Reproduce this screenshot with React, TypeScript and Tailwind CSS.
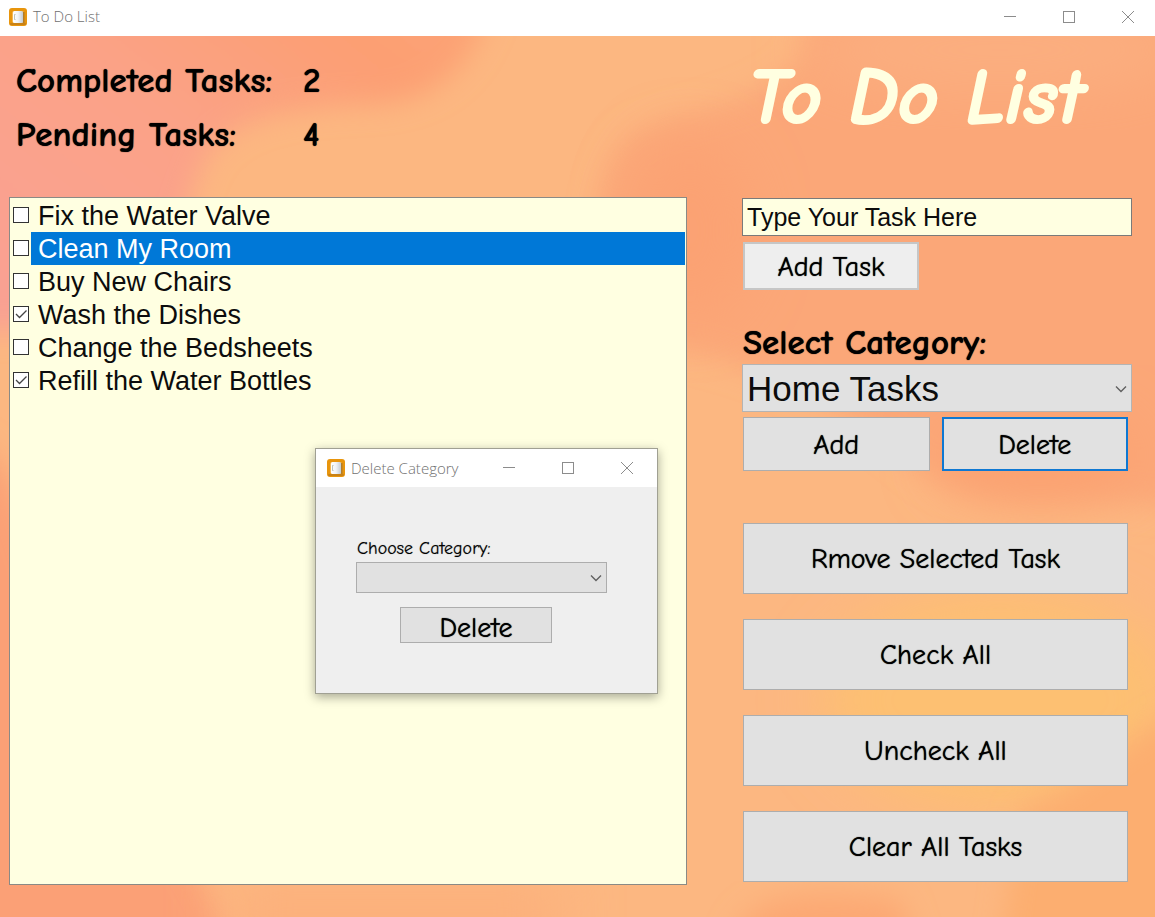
import { useState } from 'react'
import type { ReactNode } from 'react'

type Task = {
  id: number
  label: string
  done: boolean
}

const TASKS: Task[] = [
  { id: 1, label: 'Fix the Water Valve', done: false },
  { id: 2, label: 'Clean My Room', done: false },
  { id: 3, label: 'Buy New Chairs', done: false },
  { id: 4, label: 'Wash the Dishes', done: true },
  { id: 5, label: 'Change the Bedsheets', done: false },
  { id: 6, label: 'Refill the Water Bottles', done: true },
]

function AppIcon() {
  return (
    <svg viewBox="0 0 18 18" className="size-[18px] shrink-0" aria-hidden="true">
      <defs>
        <linearGradient id="page" x1="0" x2="1">
          <stop offset="0" stopColor="#ffffff" />
          <stop offset="0.5" stopColor="#f1f3f5" />
          <stop offset="1" stopColor="#c3cbd2" />
        </linearGradient>
      </defs>
      <rect width="18" height="18" rx="3" fill="#e8950c" />
      <rect x="1" y="15" width="16" height="2" rx="1" fill="#c98216" />
      <rect x="3" y="3" width="12" height="12" rx="2" fill="#f3b754" />
      <rect x="4" y="3" width="10" height="12" rx="1.5" fill="url(#page)" />
      <path d="M6.500 6.500H5.500V11.500H6.500" fill="none" stroke="#a3ab98" strokeWidth="0.7" />
      <rect x="14" y="4" width="1.5" height="11" fill="#b07d2c" />
    </svg>
  )
}

function TitleBar({ title, className }: { title: string; className: string }) {
  return (
    <header className={`flex items-center bg-white ${className}`}>
      <AppIcon />
      <span className='ml-[6px] flex-1 whitespace-nowrap pb-px font-["Segoe_UI","Open_Sans",sans-serif] text-[15px] leading-5 font-light text-[#707070]'>
        {title}
      </span>
      <div className="flex gap-[35px] text-[#8c8c8c]">
        <button type="button" aria-label="Minimize" className="w-6">
          <svg viewBox="0 0 24 12" className="h-3 w-6" stroke="currentColor" fill="none" shapeRendering="crispEdges">
            <path d="M6 5.500h12" />
          </svg>
        </button>
        <button type="button" aria-label="Maximize" className="w-6">
          <svg viewBox="0 0 24 12" className="h-3 w-6" stroke="currentColor" fill="none" shapeRendering="crispEdges">
            <path d="M6.500 0.500h11v11h-11z" />
          </svg>
        </button>
        <button type="button" aria-label="Close" className="w-6">
          <svg viewBox="0 0 24 12" className="h-3 w-6" stroke="currentColor" fill="none">
            <path d="M6 0l12 12M18 0L6 12" />
          </svg>
        </button>
      </div>
    </header>
  )
}

function Backdrop() {
  return (
    <svg
      viewBox="0 36 1155 881"
      preserveAspectRatio="none"
      className="absolute inset-0 size-full"
      aria-hidden="true"
    >
      <defs>
        <filter id="soft" x="-20%" y="-20%" width="140%" height="140%">
          <feGaussianBlur stdDeviation="14" />
        </filter>
        <filter id="softer" x="-50%" y="-50%" width="200%" height="200%">
          <feGaussianBlur stdDeviation="28" />
        </filter>
        <linearGradient id="rose" x1="0" y1="0.8" x2="1" y2="0">
          <stop offset="0" stopColor="#f9a193" />
          <stop offset="0.45" stopColor="#fba287" />
          <stop offset="0.75" stopColor="#fc9f73" />
          <stop offset="1" stopColor="#fca575" />
        </linearGradient>
      </defs>
      <rect y="36" width="1155" height="881" fill="#fcb781" />
      <path
        d="M-60 -20H500C480 50 455 95 380 104C300 106 230 115 205 160C190 190 186 230 150 300C80 340 0 330 -60 330Z"
        fill="url(#rose)"
        filter="url(#soft)"
      />
      <path
        d="M820 -20H1220V520C1100 480 980 520 920 470C840 400 740 350 600 340C590 250 590 170 630 135C680 110 760 105 800 60Z"
        fill="#fba778"
        filter="url(#soft)"
      />
      <ellipse cx="1000" cy="50" rx="190" ry="40" fill="#fbaf80" filter="url(#softer)" />
      <ellipse cx="690" cy="230" rx="60" ry="90" fill="#fba273" filter="url(#softer)" />
      <ellipse cx="1040" cy="455" rx="100" ry="45" fill="#fba271" filter="url(#softer)" />
      <ellipse cx="1000" cy="700" rx="180" ry="110" fill="#fdc072" filter="url(#softer)" />
      <path d="M1020 810C1090 790 1130 720 1220 700V960H1000Z" fill="#fcae6f" filter="url(#soft)" />
      <path d="M730 960C735 900 780 885 900 900L920 960Z" fill="#fca873" filter="url(#soft)" />
      <path d="M-60 440C0 430 20 480 60 640C120 800 220 860 230 960H-60Z" fill="#fba076" filter="url(#soft)" />
      <path d="M230 960V880H560V960Z" fill="#fcb07b" filter="url(#softer)" />
    </svg>
  )
}

function PushButton({ children, className }: { children: ReactNode; className: string }) {
  return (
    <button
      type="button"
      className={`text-[28px] leading-8 whitespace-nowrap text-black [text-shadow:0_0_1px_black] ${className}`}
    >
      {children}
    </button>
  )
}

function Chevron({ className }: { className: string }) {
  return (
    <svg
      viewBox="0 0 12 8"
      className={`pointer-events-none absolute h-2 w-3 ${className}`}
      fill="none"
      stroke="#606060"
      strokeWidth="1.4"
      aria-hidden="true"
    >
      <path d="M1 1.500l5 5 5-5" />
    </svg>
  )
}

function TaskRow({
  task,
  selected,
  onSelect,
  onToggle,
}: {
  task: Task
  selected: boolean
  onSelect: () => void
  onToggle: () => void
}) {
  return (
    <li className="flex h-[33px]" onClick={onSelect}>
      <span className="relative mt-2 ml-[3px] size-4 shrink-0">
        <input
          id={`task-${task.id}`}
          type="checkbox"
          checked={task.done}
          onChange={onToggle}
          className="block size-4 appearance-none border border-[#333] bg-white"
        />
        {task.done ? (
          <svg
            viewBox="0 0 16 16"
            className="pointer-events-none absolute inset-0 size-4"
            fill="none"
            stroke="#444"
            strokeWidth="1.3"
            aria-hidden="true"
          >
            <path d="M3 8l3.500 3.500L13.500 4.500" />
          </svg>
        ) : null}
      </span>
      <label
        htmlFor={`task-${task.id}`}
        className={`ml-[2px] flex-1 pl-[7px] text-[27px] leading-[34px] ${
          selected ? 'bg-[#0078d7] text-white' : 'text-[#0c0c0c]'
        }`}
      >
        {task.label}
      </label>
    </li>
  )
}

function DeleteCategoryDialog() {
  return (
    <section
      role="dialog"
      aria-label="Delete Category"
      className="absolute top-[412px] left-[315px] w-[343px] border border-[#a0a093] bg-[#efefef] shadow-[0_3px_10px_rgba(0,0,0,0.35)]"
    >
      <TitleBar title="Delete Category" className="h-[38px] pr-[18px] pl-[11px]" />
      <div className="flex flex-col px-10 pt-12 pb-[50px]">
        <label
          htmlFor="doomed"
          className="pl-px text-[18px] leading-[27px] text-black [text-shadow:0_0_1px_#0006]"
        >
          Choose Category:
        </label>
        <div className="relative w-[251px]">
          <select id="doomed" className="block h-[31px] w-full appearance-none border border-[#adadad] bg-[#e1e1e1]">
            <option value=""></option>
          </select>
          <Chevron className="top-3 right-[5px]" />
        </div>
        <PushButton className="mt-[14px] ml-11 h-9 w-[152px] border border-[#adadad] bg-[#e1e1e1] pt-1">
          Delete
        </PushButton>
      </div>
    </section>
  )
}

export default function App() {
  const [tasks, setTasks] = useState(TASKS)
  const [selectedId, setSelectedId] = useState(2)
  const [draft, setDraft] = useState('Type Your Task Here')

  const completed = tasks.filter((task) => task.done).length

  function toggle(id: number) {
    setTasks((current) => current.map((task) => (task.id === id ? { ...task, done: !task.done } : task)))
  }

  return (
    <div className='flex min-h-screen flex-col font-["Comic_Sans_MS","Comic_Neue",cursive]'>
      <TitleBar title="To Do List" className="h-9 pr-[15px] pb-[3px] pl-[9px]" />

      <main className="relative flex flex-1 flex-col">
        <Backdrop />

        <div className="relative flex flex-1 gap-[55px] pr-[23px] pb-8 pl-[9px]">
          <div className="flex flex-1 flex-col">
            <dl className="grid h-[161px] grid-cols-[287px_1fr] content-start pt-[18px] pl-[7px] text-[35px] leading-[54px] font-bold text-black [text-shadow:0_0_1px_black]">
              <dt>Completed Tasks:</dt>
              <dd>{completed}</dd>
              <dt>Pending Tasks:</dt>
              <dd>{tasks.length - completed}</dd>
            </dl>
            <ul className='flex-1 border border-[#8a8a85] bg-[#ffffe1] pt-px pr-px font-["Arial","Liberation_Sans",sans-serif]'>
              {tasks.map((task) => (
                <TaskRow
                  key={task.id}
                  task={task}
                  selected={task.id === selectedId}
                  onSelect={() => setSelectedId(task.id)}
                  onToggle={() => toggle(task.id)}
                />
              ))}
            </ul>
          </div>

          <div className="flex w-[390px] shrink-0 flex-col">
            <h1 className="h-[162px] pt-5 pl-[6px] text-[78px] leading-[84px] font-bold whitespace-nowrap text-[#ffffe1] italic [-webkit-text-stroke:2px_#ffffe1]">
              To Do List
            </h1>
            <input
              type="text"
              aria-label="New task"
              value={draft}
              onChange={(event) => setDraft(event.target.value)}
              className='h-[38px] border border-[#7a7a7a] bg-[#ffffe1] px-1 font-["Arial","Liberation_Sans",sans-serif] text-[25px] leading-8 text-[#0c0c0c] outline-none'
            />
            <PushButton className="mt-[6px] ml-px h-12 w-44 border-2 border-[#c6c6c6] bg-[#eeeeee] pt-[2px]">
              Add Task
            </PushButton>

            <label
              htmlFor="category"
              className="mt-8 pl-px text-[35px] leading-[42px] font-bold text-black [text-shadow:0_0_1px_black]"
            >
              Select Category:
            </label>
            <div className="relative">
              <select
                id="category"
                className='block h-12 w-full appearance-none border border-[#b4b4b4] bg-[#e1e1e1] px-1 pt-[2px] font-["Arial","Liberation_Sans",sans-serif] text-[35px] leading-[44px] text-[#0c0c0c]'
              >
                <option>Home Tasks</option>
              </select>
              <Chevron className="top-[21px] right-[5px]" />
            </div>

            <div className="mt-[5px] mr-1 ml-px grid grid-cols-2 gap-3">
              <PushButton className="h-[54px] border border-[#adadad] bg-[#e1e1e1] pt-[2px]">Add</PushButton>
              <PushButton className="h-[54px] border-2 border-[#0f78d2] bg-[#e1e1e1] pt-[2px]">Delete</PushButton>
            </div>

            <div className="mt-[52px] mr-1 ml-px flex flex-col gap-[25px]">
              <PushButton className="h-[71px] border border-[#adadad] bg-[#e1e1e1]">Rmove Selected Task</PushButton>
              <PushButton className="h-[71px] border border-[#adadad] bg-[#e1e1e1]">Check All</PushButton>
              <PushButton className="h-[71px] border border-[#adadad] bg-[#e1e1e1]">Uncheck All</PushButton>
              <PushButton className="h-[71px] border border-[#adadad] bg-[#e1e1e1]">Clear All Tasks</PushButton>
            </div>
          </div>
        </div>

        <DeleteCategoryDialog />
      </main>
    </div>
  )
}
